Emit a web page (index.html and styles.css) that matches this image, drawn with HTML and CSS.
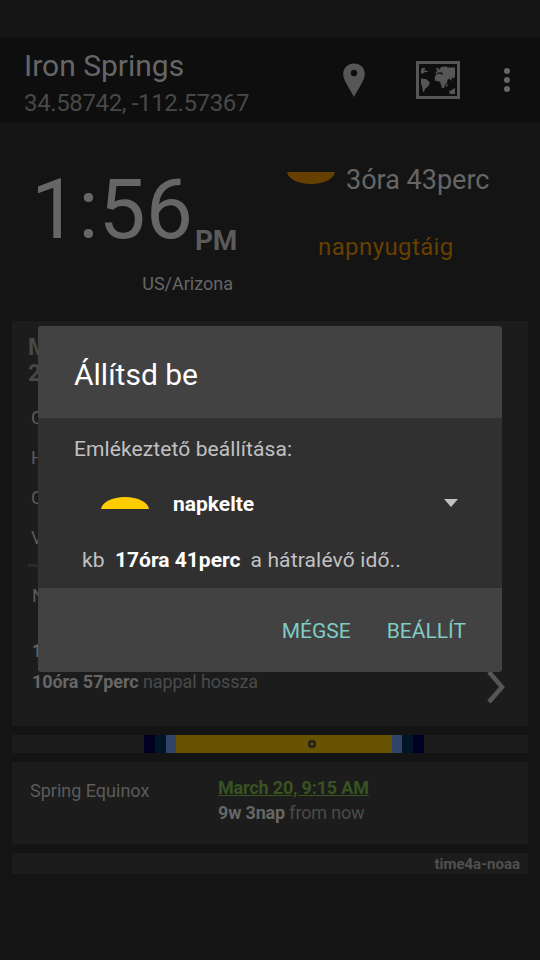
FILE: index.html
```html
<!DOCTYPE html>
<html lang="hu">
<head>
<meta charset="utf-8">
<title>Iron Springs</title>
<link rel="stylesheet" href="styles.css">
</head>
<body>
<div class="screen">
  <header class="appbar">
    <div class="place">
      <div class="place-name">Iron Springs</div>
      <div class="place-coords">34.58742, -112.57367</div>
    </div>
    <svg class="pin" viewBox="0 0 22 34"><path fill-rule="evenodd" d="M11 0.500C4.800 0.500 0.200 4.900 0.200 11C0.200 17.500 6.500 25 11 34C15.500 25 21.800 17.500 21.800 11C21.800 4.900 17.200 0.500 11 0.500ZM11 6.800a3.200 3.200 0 1 1 0 6.400a3.200 3.200 0 1 1 0-6.400Z"/></svg>
    <svg class="map" viewBox="0 0 44 38"><rect x="1.500" y="1.500" width="41" height="35" fill="none" stroke="#565656" stroke-width="3"/><path d="M5 8L8 6.500L9.500 8L7.500 10L11 9.500L12 11H9L6 13L5 12ZM5 17.500L10 18L14 21.500L12 25.500L9 28L8 31H7L6 25L5 23ZM20 8L21 6.500L23 7L22 9L24 8L25 6L30 5.500L32 6.500L39 6.500V15L38 18L36 16L35.500 20L33.500 17.500L31.500 19L31 22L29.500 23L28 27H26L24.500 22L23.500 20.500L19.500 20L18.500 17L20 13.500L23 12.500L27 14L26 11.500L22 11.500L20 13L19.500 11L21.500 10ZM30 24L31.500 22.500V25L30 26ZM33 30.500L39 27V33H34Z"/></svg>
    <svg class="more" viewBox="0 0 6 24"><circle cx="3" cy="3" r="3"/><circle cx="3" cy="12" r="3"/><circle cx="3" cy="21" r="3"/></svg>
  </header>
  <section class="now">
    <div class="clock">
      <div class="clock-time"><span class="digits">1:56</span><span class="ampm">PM</span></div>
      <div class="zone">US/Arizona</div>
    </div>
    <div class="next">
      <div class="next-row"><svg class="setting" viewBox="0 0 48 12"><path d="M0 0H48C47 7 37 12 24 12S1 7 0 0Z"/></svg><span class="next-time">3óra 43perc</span></div>
      <div class="next-label">napnyugtáig</div>
    </div>
  </section>
  <section class="card day">
    <div class="date"><div>M</div><div>2</div></div>
    <ul class="rows"><li>C</li><li>H</li><li>C</li><li>V</li></ul>
    <div class="rule"></div>
    <div class="noon">N</div>
    <div class="length light">1</div>
    <div class="length"><b>10óra 57perc</b> nappal hossza</div>
    <svg class="chevron" viewBox="0 0 18 34"><path d="M2 2L15 17L2 32"/></svg>
  </section>
  <div class="daybar">
    <i class="night"></i><i class="navy"></i><i class="teal"></i><i class="dawn"></i>
    <i class="sun"><svg class="marker" viewBox="0 0 8 8"><circle cx="4" cy="4" r="3"/></svg></i>
    <i class="dawn"></i><i class="teal"></i><i class="navy"></i>
  </div>
  <section class="card equinox">
    <div class="equinox-name">Spring Equinox</div>
    <div class="equinox-info">
      <div class="equinox-date">March 20, 9:15 AM</div>
      <div class="equinox-in"><b>9w 3nap</b> from now</div>
    </div>
  </section>
  <footer class="card source">time4a-noaa</footer>

  <div class="dialog">
    <h1 class="dialog-title">Állítsd be</h1>
    <div class="dialog-body">
      <div class="prompt">Emlékeztető beállítása:</div>
      <div class="select"><svg class="rising" viewBox="0 0 48 12"><path d="M0 12H48C47 5 37 0 24 0S1 5 0 12Z"/></svg><span class="choice">napkelte</span><svg class="caret" viewBox="0 0 14 8"><path d="M0 0H14L7 8Z"/></svg></div>
      <div class="remaining"><span class="kb">kb</span><b>17óra 41perc</b><span class="left">a hátralévő idő..</span></div>
    </div>
    <div class="actions"><span class="cancel">MÉGSE</span><span class="ok">BEÁLLÍT</span></div>
  </div>
</div>
</body>
</html>
```
FILE: styles.css
```css
* { box-sizing: border-box; }
body { margin: 0; background: #141414; font-family: Roboto, "Noto Sans", sans-serif; font-size: 18px; color: #5b5b5b; }
svg { display: block; flex: none; }
.screen { position: relative; width: 540px; height: 960px; padding-top: 38px; overflow: hidden; white-space: nowrap; }

.appbar { height: 84px; background: #0e0e0e; display: flex; align-items: flex-start; }
.place { width: 343px; padding: 10px 0 0 24px; }
.place-name { font-size: 30px; line-height: 36px; color: #666; }
.place-coords { font-size: 24px; line-height: 38px; letter-spacing: -0.36px; color: #484848; }
.pin { width: 22px; height: 34px; margin-top: 25px; fill: #565656; }
.map { width: 44px; height: 38px; margin: 23px 0 0 51px; fill: #565656; }
.more { width: 6px; height: 24px; margin: 30px 0 0 44px; fill: #666; }

.now { height: 199px; display: flex; }
.clock { width: 237px; text-align: right; padding: 36px 0 0; }
.clock-time { display: flex; justify-content: flex-end; height: 101px; }
.digits { font-size: 84px; line-height: 103px; color: #666; }
.ampm { font-size: 28px; font-weight: 700; line-height: 32px; margin: 67px 0 0 2px; letter-spacing: -0.3px; }
.zone { line-height: 22px; margin: 14px 4px 0 0; color: #666; }
.next { padding: 42px 0 0 50px; }
.next-row { display: flex; height: 32px; }
.setting { width: 48px; height: 12px; margin-top: 8px; fill: #664000; }
.next-time { font-size: 27px; line-height: 32px; margin-left: 11px; color: #666; }
.next-label { font-size: 24px; line-height: 32px; margin: 35px 0 0 31px; letter-spacing: 0.4px; color: #664000; }

.card { margin: 0 12px; background: #1c1c1c; }
.day { height: 405px; padding: 14px 0 0 20px; }
.date { margin-left: -4px; font-size: 23px; line-height: 26px; font-weight: 700; color: #484848; }
.rows { margin: 11px 0 0 -1px; padding: 0; list-style: none; line-height: 40px; }
.rule { height: 3px; width: 460px; margin: 6px 0 0 -4px; background: #2a2a2a; }
.noon { line-height: 24px; margin-top: 17px; }
.length { line-height: 24px; margin-top: 7px; letter-spacing: -0.08px; color: #4b4b4b; }
.length b { color: #666; }
.light { margin-top: 31px; font-weight: 700; color: #666; }
.chevron { width: 18px; height: 34px; margin: -24px 0 0 455px; fill: none; stroke: #565656; stroke-width: 4.5; }

.daybar { height: 18px; margin: 9px 12px; background: #1c1c1c; display: flex; }
.night { width: 132px; }
.navy { width: 11px; background: #002; }
.teal { width: 11px; background: #001526; }
.dawn { width: 10px; background: #33446b; }
.sun { width: 216px; background: #665200; }
.marker { width: 8px; height: 8px; margin: 5px 0 0 132px; fill: #664000; stroke: #1c1c1c; stroke-width: 2; }

.equinox { height: 82px; display: flex; }
.equinox-name { width: 206px; padding: 17px 0 0 18px; line-height: 24px; }
.equinox-info { padding-top: 13px; line-height: 25px; letter-spacing: -0.17px; color: #4b4b4b; }
.equinox-date { color: #375320; font-weight: 700; text-decoration: underline; }
.equinox-in b { color: #666; }
.source { height: 21px; margin-top: 9px; padding-right: 8px; text-align: right; font-size: 15px; line-height: 22px; font-weight: 700; color: #505050; }

.dialog { position: absolute; left: 38px; top: 326px; width: 464px; height: 346px; border-radius: 3px; overflow: hidden; background: #424242; }
.dialog-title { margin: 0; height: 92px; padding-left: 36px; font-size: 30px; line-height: 97px; font-weight: 400; color: #fff; }
.dialog-body { height: 170px; background: #303030; padding: 18px 0 0 36px; font-size: 21px; line-height: 26px; letter-spacing: 0.1px; color: #c1c1c1; }
.select { display: flex; margin-top: 29px; padding-left: 27px; color: #fff; font-weight: 700; letter-spacing: 0; }
.rising { width: 48px; height: 12px; margin-top: 6px; fill: #fc0; }
.choice { width: 233px; margin-left: 24px; }
.caret { width: 14px; height: 8px; margin: 8px 0 0 38px; fill: #c1c1c1; }
.remaining { display: flex; margin-top: 30px; padding-left: 8px; gap: 10px; }
.kb { width: 23px; }
.remaining b { color: #fff; letter-spacing: 0; }
.left { letter-spacing: 0.15px; }
.actions { display: flex; justify-content: flex-end; padding: 29px 36px 0 0; gap: 36px; font-size: 21px; line-height: 28px; color: #80cbc4; }
```
